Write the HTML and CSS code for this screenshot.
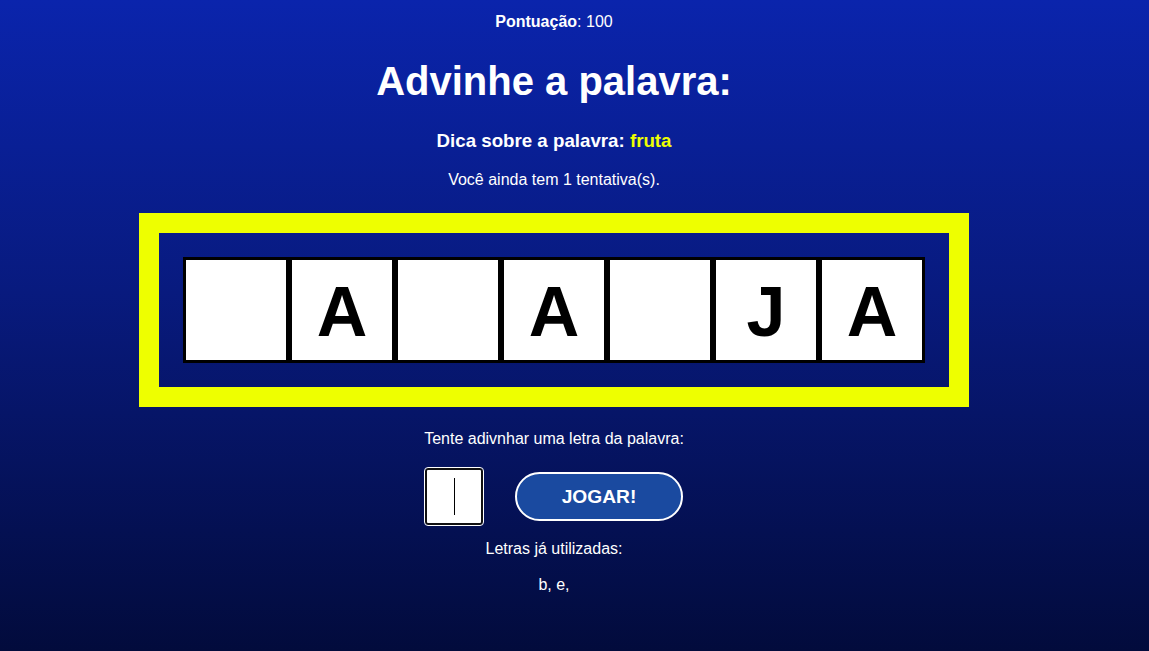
FILE: index.html
```html
<!DOCTYPE html>
<html lang="pt-BR">
<head>
<meta charset="utf-8">
<title>Advinhe a palavra</title>
<link rel="stylesheet" href="styles.css">
</head>
<body>
<main class="game">
  <p class="score"><strong>Pontuação</strong>: 100</p>
  <h1 class="title">Advinhe a palavra:</h1>
  <h3 class="hint">Dica sobre a palavra: <span class="hint-word">fruta</span></h3>
  <p class="tries">Você ainda tem 1 tentativa(s).</p>
  <div class="board">
    <div class="tiles">
      <div class="tile"></div>
      <div class="tile">A</div>
      <div class="tile"></div>
      <div class="tile">A</div>
      <div class="tile"></div>
      <div class="tile">J</div>
      <div class="tile">A</div>
    </div>
  </div>
  <p class="prompt">Tente adivnhar uma letra da palavra:</p>
  <div class="controls">
    <div class="letter-wrap">
      <input class="letter" type="text" maxlength="1">
      <span class="caret"></span>
    </div>
    <button class="play">JOGAR!</button>
  </div>
  <p class="used-label">Letras já utilizadas:</p>
  <p class="used">b, e,</p>
</main>
</body>
</html>
```
FILE: styles.css
```css
html, body {
  margin: 0;
  padding: 0;
}
body {
  height: 651px;
  background: linear-gradient(to bottom, #0a24ac 0%, #081a7e 45%, #020b3c 100%);
  font-family: "Liberation Sans", Arial, sans-serif;
  color: #ffffff;
  overflow: hidden;
}
.game {
  width: 1108px;
  display: flex;
  flex-direction: column;
  align-items: center;
  text-align: center;
}
.score {
  margin: 13px 0 0;
  font-size: 16px;
  line-height: 18px;
}
.title {
  margin: 27px 0 0;
  font-size: 40px;
  line-height: 46px;
  font-weight: bold;
}
.hint {
  margin: 26px 0 0;
  font-size: 18.72px;
  line-height: 22px;
  font-weight: bold;
}
.hint-word {
  color: #eeff00;
}
.tries {
  margin: 19px 0 0;
  font-size: 16px;
  line-height: 18px;
}
.board {
  margin-top: 24px;
  width: 790px;
  border: 20px solid #eeff00;
  padding: 24px 0;
  display: flex;
  justify-content: center;
}
.tiles {
  display: flex;
}
.tile {
  width: 100px;
  height: 100px;
  border: 3px solid #000000;
  background: #ffffff;
  color: #000000;
  font-size: 70px;
  font-weight: bold;
  line-height: 104px;
  text-align: center;
}
.prompt {
  margin: 23px 0 0;
  font-size: 16px;
  line-height: 18px;
}
.controls {
  margin-top: 20px;
  display: flex;
  align-items: center;
  gap: 32px;
}
.letter-wrap {
  position: relative;
  width: 58px;
  height: 57px;
}
.letter {
  box-sizing: border-box;
  width: 58px;
  height: 57px;
  margin: 0;
  border: 2px solid #111111;
  border-radius: 3px;
  background: #ffffff;
  outline: 1px solid #ffffff;
  font-size: 32px;
  text-align: center;
  padding: 0;
}
.caret {
  position: absolute;
  left: 29px;
  top: 10px;
  width: 1px;
  height: 37px;
  background: #000000;
}
.play {
  box-sizing: border-box;
  width: 168px;
  height: 49px;
  border: 2px solid #ffffff;
  border-radius: 25px;
  background: #1a4aa0;
  color: #ffffff;
  font-family: "Liberation Sans", Arial, sans-serif;
  font-size: 19.2px;
  font-weight: bold;
  padding: 0;
}
.used-label {
  margin: 15px 0 0;
  font-size: 16px;
  line-height: 18px;
}
.used {
  margin: 18px 0 0;
  font-size: 16px;
  line-height: 18px;
}
```
